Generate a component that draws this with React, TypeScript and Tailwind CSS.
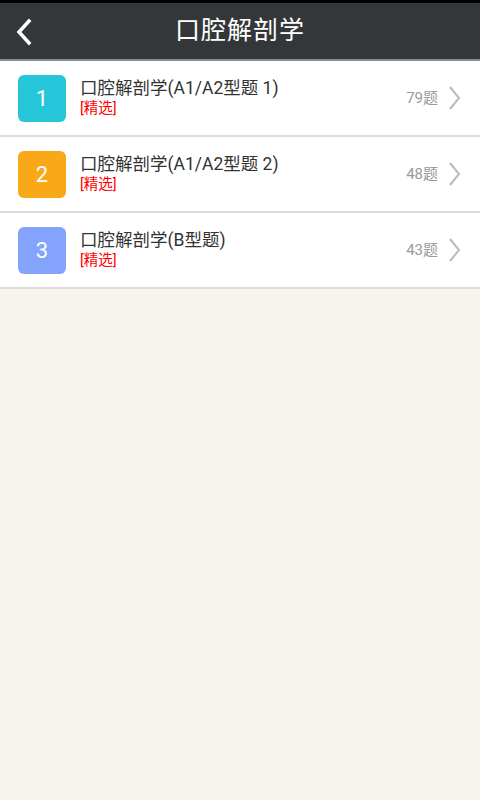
import React from "react";

const items = [
  { n: "1", color: "bg-[#26c6da]", title: "口腔解剖学(A1/A2型题 1)", count: "79题" },
  { n: "2", color: "bg-[#f9a818]", title: "口腔解剖学(A1/A2型题 2)", count: "48题" },
  { n: "3", color: "bg-[#84a3fd]", title: "口腔解剖学(B型题)", count: "43题" },
];

export default function App() {
  return (
    <div
      className="w-[480px] h-[800px] bg-[#f7f4ee] flex flex-col"
      style={{ fontFamily: '"Roboto", "Noto Sans CJK SC", sans-serif' }}
    >
      <div className="h-[3px] bg-black" />
      <div className="h-[56px] bg-[#343739] relative flex items-center justify-center">
        <svg className="absolute left-[14px] top-[15px]" width="20" height="28" viewBox="0 0 20 28">
          <path d="M15 3 L5 14 L15 25" fill="none" stroke="white" strokeWidth="3.5" strokeLinecap="square" />
        </svg>
        <span className="text-white text-[25px] tracking-[1px]">口腔解剖学</span>
      </div>
      <div className="h-[2px] bg-[#8a8d8f]" />
      {items.map((it) => (
        <div key={it.n} className="h-[76px] bg-white border-b-[2px] border-[#dcdcdc] flex items-center pl-[18px] pr-[18px]">
          <div className={`w-[48px] h-[47px] rounded-[6px] ${it.color} flex items-center justify-center text-white text-[22px]`}>
            {it.n}
          </div>
          <div className="flex flex-col ml-[14px] flex-1 -mt-[1px]">
            <span className="text-[17.5px] leading-[21px] text-[#333]">{it.title}</span>
            <span className="text-[14.5px] leading-[19px] text-[#f00]">[精选]</span>
          </div>
          <span className="text-[15px] text-[#9a9a9a] mr-[10px]">{it.count}</span>
          <svg width="14" height="26" viewBox="0 0 14 26">
            <path d="M2 2 L11 13 L2 24" fill="none" stroke="#bbb" strokeWidth="2" />
          </svg>
        </div>
      ))}
    </div>
  );
}
